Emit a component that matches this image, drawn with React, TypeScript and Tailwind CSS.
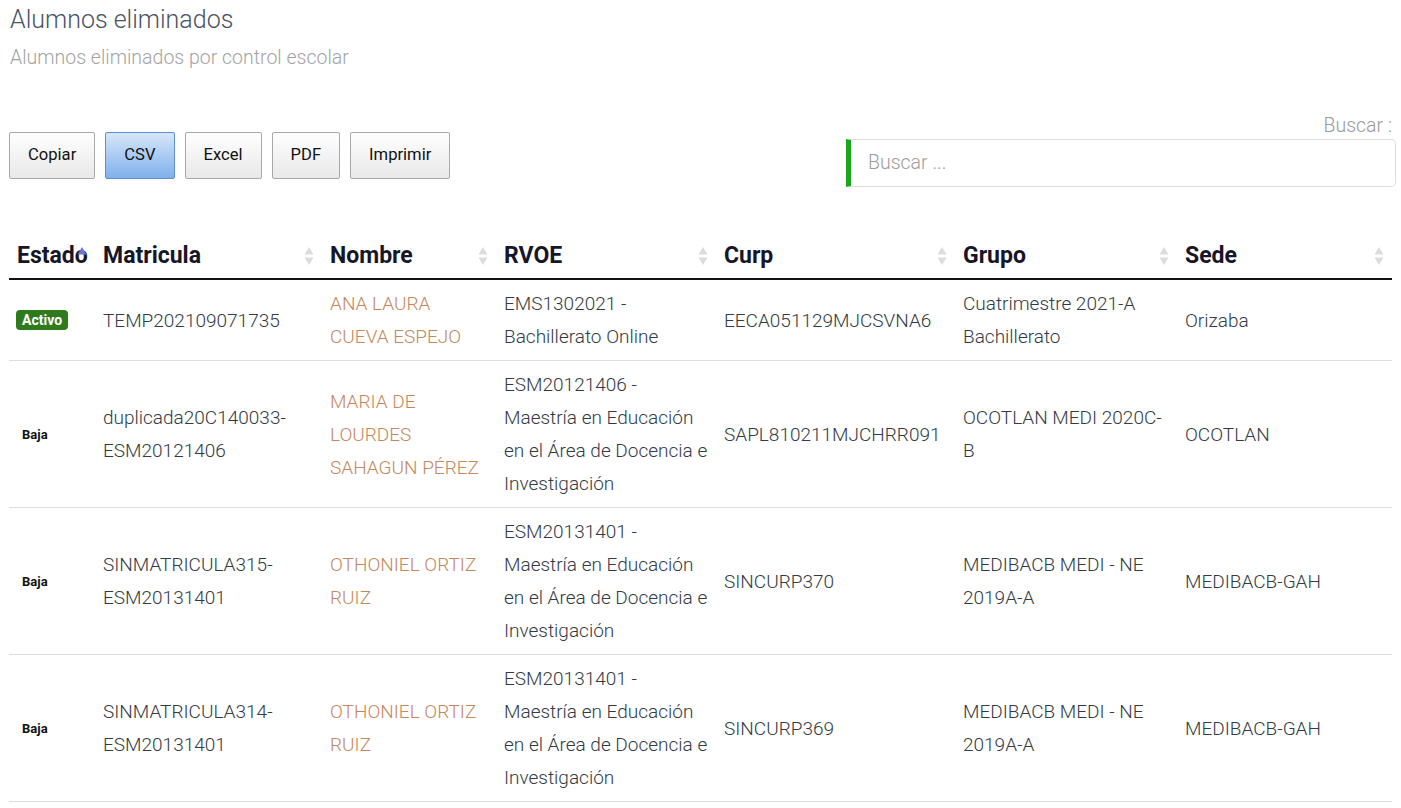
import React from "react";

type Row = {
  estado: "Activo" | "Baja";
  matricula: string;
  nombre: string;
  rvoe: string;
  curp: string;
  grupo: string;
  sede: string;
};

const rows: Row[] = [
  {
    estado: "Activo",
    matricula: "TEMP202109071735",
    nombre: "ANA LAURA CUEVA ESPEJO",
    rvoe: "EMS1302021 - Bachillerato Online",
    curp: "EECA051129MJCSVNA6",
    grupo: "Cuatrimestre 2021-A Bachillerato",
    sede: "Orizaba",
  },
  {
    estado: "Baja",
    matricula: "duplicada20C140033-ESM20121406",
    nombre: "MARIA DE LOURDES SAHAGUN PÉREZ",
    rvoe: "ESM20121406 - Maestría en Educación en el Área de Docencia e Investigación",
    curp: "SAPL810211MJCHRR091",
    grupo: "OCOTLAN MEDI 2020C-B",
    sede: "OCOTLAN",
  },
  {
    estado: "Baja",
    matricula: "SINMATRICULA315-ESM20131401",
    nombre: "OTHONIEL ORTIZ RUIZ",
    rvoe: "ESM20131401 - Maestría en Educación en el Área de Docencia e Investigación",
    curp: "SINCURP370",
    grupo: "MEDIBACB MEDI - NE 2019A-A",
    sede: "MEDIBACB-GAH",
  },
  {
    estado: "Baja",
    matricula: "SINMATRICULA314-ESM20131401",
    nombre: "OTHONIEL ORTIZ RUIZ",
    rvoe: "ESM20131401 - Maestría en Educación en el Área de Docencia e Investigación",
    curp: "SINCURP369",
    grupo: "MEDIBACB MEDI - NE 2019A-A",
    sede: "MEDIBACB-GAH",
  },
];

const cols = [
  { label: "Estado", w: 86 },
  { label: "Matricula", w: 227 },
  { label: "Nombre", w: 174 },
  { label: "RVOE", w: 220 },
  { label: "Curp", w: 239 },
  { label: "Grupo", w: 222 },
  { label: "Sede", w: 215 },
];

function SortIcon({ active }: { active?: boolean }) {
  return (
    <svg
      width="10"
      height="20"
      viewBox="0 0 10 20"
      className="absolute right-[8px] top-1/2 -translate-y-1/2"
    >
      <polygon points="5,1 9.5,8.5 0.5,8.5" fill={active ? "#6f78d0" : "#dcdcdc"} />
      {!active && <polygon points="0.5,11.5 9.5,11.5 5,19" fill="#dcdcdc" />}
    </svg>
  );
}

export default function App() {
  const font = { fontFamily: "Roboto, 'Liberation Sans', sans-serif" };
  const cell = "py-[7px] text-[19px] font-light leading-[33px]";
  return (
    <div className="min-h-[808px] w-[1401px] bg-white" style={font}>
      <div className="pl-[10px] pr-[5px]">
        <h1 className="pt-[5px] text-[25px] font-light leading-[30px] text-[#4a5364]">
          Alumnos eliminados
        </h1>
        <p className="mt-[11px] text-[19.5px] font-light leading-[24px] text-[#a3a3a3]">
          Alumnos eliminados por control escolar
        </p>

        <div className="mt-[41px] flex items-start justify-between">
          <div className="mt-[21px] flex gap-[10px] -ml-px">
            {["Copiar", "CSV", "Excel", "PDF", "Imprimir"].map((b) => (
              <button
                key={b}
                className={
                  b === "CSV"
                    ? "h-[47px] rounded-[2px] border border-[#5f8fd0] bg-gradient-to-b from-[#d6e6f9] to-[#7fb0ea] px-[18px] text-[16.6px] text-[#111]"
                    : "h-[47px] rounded-[2px] border border-[#a8a8a8] bg-gradient-to-b from-[#ffffff] to-[#e8e8e8] px-[18px] text-[16.6px] text-[#111]"
                }
              >
                {b}
              </button>
            ))}
          </div>
          <div className="flex w-[550px] flex-col items-end">
            <label className="mt-[3px] pr-[4px] text-[19.5px] font-light leading-[24px] text-[#9a9a9a]">
              Buscar :
            </label>
            <div className="mt-[1px] flex h-[48px] w-full items-center rounded-r-[5px] border border-l-[5px] border-[#dedede] border-l-[#1aa81a] bg-white pl-[17px]">
              <span className="text-[19.5px] font-light text-[#9d9d9d]">Buscar ...</span>
            </div>
          </div>
        </div>

        <table className="mt-[47px] w-[1383px] table-fixed -ml-px border-collapse">
          <colgroup>
            {cols.map((c) => (
              <col key={c.label} style={{ width: c.w }} />
            ))}
          </colgroup>
          <thead>
            <tr className="border-b-2 border-[#111]">
              {cols.map((c, i) => (
                <th
                  key={c.label}
                  className="relative whitespace-nowrap px-[8px] pb-[8px] pt-[8px] text-left text-[23px] font-bold leading-[28px] text-[#161628]"
                >
                  {c.label}
                  <SortIcon active={i === 0} />
                </th>
              ))}
            </tr>
          </thead>
          <tbody>
            {rows.map((r, i) => (
              <tr key={i} className="border-b border-[#dddddd] align-middle">
                <td className="px-[7px] py-[7px]">
                  {r.estado === "Activo" ? (
                    <span className="inline-block rounded-[4px] bg-[#2f7a1c] px-[6px] py-[1px] text-[14px] font-bold leading-[18px] text-white">
                      Activo
                    </span>
                  ) : (
                    <span className="px-[6px] text-[13px] font-bold text-[#111]">Baja</span>
                  )}
                </td>
                <td className={`px-[8px] text-[#333a44] ${cell}`}>
                  {r.matricula.includes("-") ? (
                    <>
                      {r.matricula.split("-")[0]}-
                      <br />
                      {r.matricula.split("-")[1]}
                    </>
                  ) : (
                    r.matricula
                  )}
                </td>
                <td className={`px-[8px] text-[#c5875c] ${cell}`}>{r.nombre}</td>
                <td className={`pl-[8px] pr-[6px] text-[#333a44] ${cell}`}>{r.rvoe}</td>
                <td className={`px-[8px] text-[#333a44] ${cell}`}>{r.curp}</td>
                <td className={`px-[8px] text-[#333a44] ${cell}`}>{r.grupo}</td>
                <td className={`px-[8px] text-[#333a44] ${cell}`}>{r.sede}</td>
              </tr>
            ))}
          </tbody>
        </table>
      </div>
    </div>
  );
}
